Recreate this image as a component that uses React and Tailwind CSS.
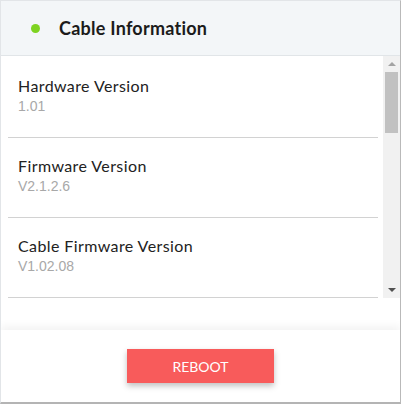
export default function App() {
  const items = [
    { label: 'Hardware Version', value: '1.01' },
    { label: 'Firmware Version', value: 'V2.1.2.6' },
    { label: 'Cable Firmware Version', value: 'V1.02.08' },
  ]

  return (
    <div className="w-[401px] h-[404px] bg-white flex flex-col border-t border-l border-[#e2e5e8] border-r border-r-[#b9b9b9] border-b-2 border-b-[#b4b4b4] font-['Lato',sans-serif] overflow-hidden">
      {/* Cabecera */}
      <div className="h-[55px] shrink-0 bg-[#f3f6f8] border-b border-[#e1e5e8] flex items-center pl-[30px]">
        <span className="w-[9px] h-[9px] rounded-full bg-[#7ed321]"></span>
        <h1 className="ml-[19px] text-[18px] font-bold tracking-[0.25px] text-[#1b1b1b] leading-none">Cable Information</h1>
      </div>

      {/* Lista */}
      <div className="h-[242px] shrink-0 flex">
        <div className="flex-1 overflow-hidden pt-[2px]">
          {items.map(item => (
            <div key={item.label} className="ml-[7px] mr-[5px] h-[80px] border-b border-[#d2d2d2] pl-[10px] pt-[18px]">
              <p className="text-[16px] leading-[20px] tracking-[0.4px] text-[#222]">{item.label}</p>
              <p className="text-[14px] leading-[16px] text-[#a8a8a8] mt-[2px] font-['Liberation_Sans',sans-serif]">{item.value}</p>
            </div>
          ))}
        </div>
        <div className="w-[17px] bg-[#f1f1f1] flex flex-col items-center">
          <div className="h-[16px] flex items-center justify-center">
            <span className="w-0 h-0 border-l-[4px] border-r-[4px] border-b-[4px] border-l-transparent border-r-transparent border-b-[#a3a3a3]"></span>
          </div>
          <div className="w-[13px] h-[61px] bg-[#c1c1c1]"></div>
          <div className="flex-1"></div>
          <div className="h-[16px] flex items-center justify-center">
            <span className="w-0 h-0 border-l-[4px] border-r-[4px] border-t-[4px] border-l-transparent border-r-transparent border-t-[#505050]"></span>
          </div>
        </div>
      </div>

      <div className="flex-1"></div>

      {/* Pie */}
      <div className="h-[72px] shrink-0 bg-white shadow-[0_-4px_8px_rgba(0,0,0,0.05)] flex items-center justify-center">
        <button className="w-[147px] h-[34px] bg-[#f85b5b] text-white text-[14px] shadow-[0_3px_6px_rgba(0,0,0,0.25)]">
          REBOOT
        </button>
      </div>
    </div>
  )
}
